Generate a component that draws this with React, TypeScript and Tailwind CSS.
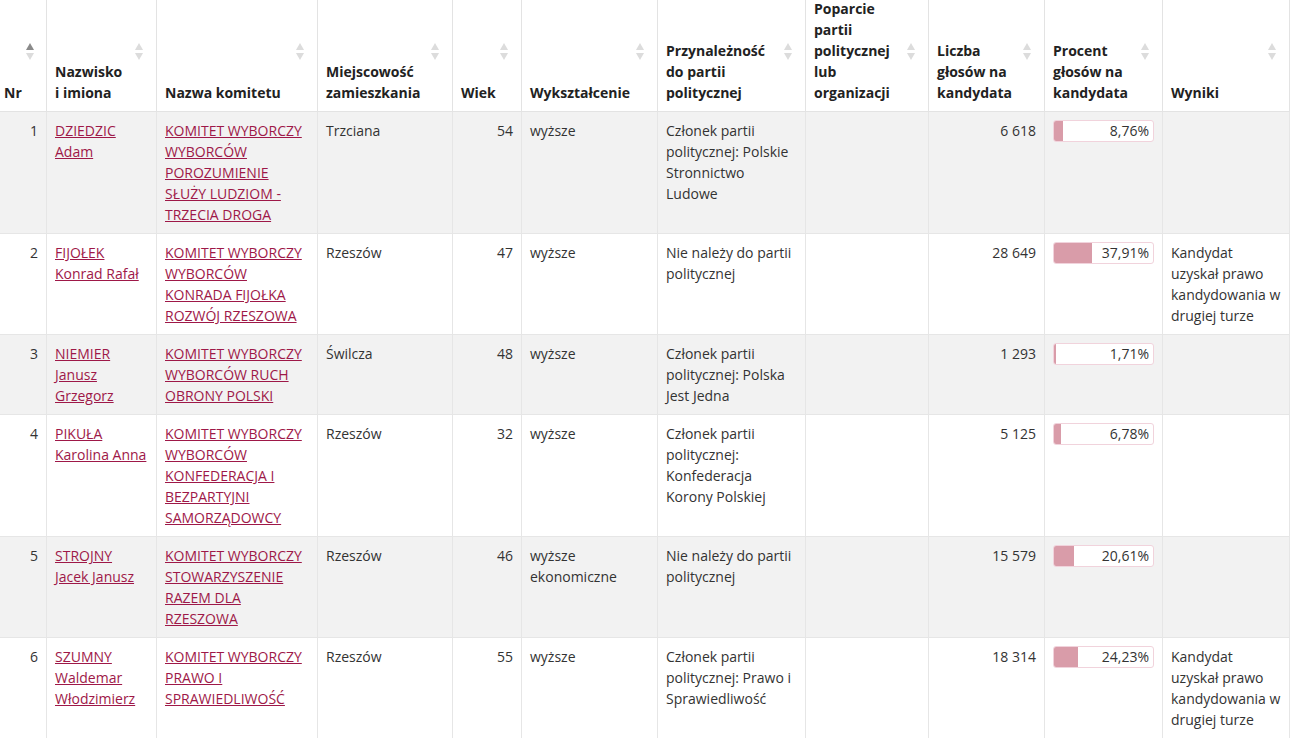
import React from 'react';

type Row = {
  nr: number;
  surname: string;
  names: string;
  committee: string;
  town: string;
  age: number;
  edu: string;
  party: string;
  support: string;
  votes: string;
  pct: number;
  result: string;
};

const rows: Row[] = [
  {
    nr: 1,
    surname: 'DZIEDZIC',
    names: 'Adam',
    committee: 'KOMITET WYBORCZY WYBORCÓW POROZUMIENIE SŁUŻY LUDZIOM - TRZECIA DROGA',
    town: 'Trzciana',
    age: 54,
    edu: 'wyższe',
    party: 'Członek partii politycznej: Polskie Stronnictwo Ludowe',
    support: '',
    votes: '6 618',
    pct: 8.76,
    result: '',
  },
  {
    nr: 2,
    surname: 'FIJOŁEK',
    names: 'Konrad Rafał',
    committee: 'KOMITET WYBORCZY WYBORCÓW KONRADA FIJOŁKA ROZWÓJ RZESZOWA',
    town: 'Rzeszów',
    age: 47,
    edu: 'wyższe',
    party: 'Nie należy do partii politycznej',
    support: '',
    votes: '28 649',
    pct: 37.91,
    result: 'Kandydat uzyskał prawo kandydowania w drugiej turze',
  },
  {
    nr: 3,
    surname: 'NIEMIER',
    names: 'Janusz Grzegorz',
    committee: 'KOMITET WYBORCZY WYBORCÓW RUCH OBRONY POLSKI',
    town: 'Świlcza',
    age: 48,
    edu: 'wyższe',
    party: 'Członek partii politycznej: Polska Jest Jedna',
    support: '',
    votes: '1 293',
    pct: 1.71,
    result: '',
  },
  {
    nr: 4,
    surname: 'PIKUŁA',
    names: 'Karolina Anna',
    committee: 'KOMITET WYBORCZY WYBORCÓW KONFEDERACJA I BEZPARTYJNI SAMORZĄDOWCY',
    town: 'Rzeszów',
    age: 32,
    edu: 'wyższe',
    party: 'Członek partii politycznej: Konfederacja Korony Polskiej',
    support: '',
    votes: '5 125',
    pct: 6.78,
    result: '',
  },
  {
    nr: 5,
    surname: 'STROJNY',
    names: 'Jacek Janusz',
    committee: 'KOMITET WYBORCZY STOWARZYSZENIE RAZEM DLA RZESZOWA',
    town: 'Rzeszów',
    age: 46,
    edu: 'wyższe ekonomiczne',
    party: 'Nie należy do partii politycznej',
    support: '',
    votes: '15 579',
    pct: 20.61,
    result: '',
  },
  {
    nr: 6,
    surname: 'SZUMNY',
    names: 'Waldemar Włodzimierz',
    committee: 'KOMITET WYBORCZY PRAWO I SPRAWIEDLIWOŚĆ',
    town: 'Rzeszów',
    age: 55,
    edu: 'wyższe',
    party: 'Członek partii politycznej: Prawo i Sprawiedliwość',
    support: '',
    votes: '18 314',
    pct: 24.23,
    result: 'Kandydat uzyskał prawo kandydowania w drugiej turze',
  },
];

const headers = [
  'Nr',
  'Nazwisko i imiona',
  'Nazwa komitetu',
  'Miejscowość zamieszkania',
  'Wiek',
  'Wykształcenie',
  'Przynależność do partii politycznej',
  'Poparcie partii politycznej lub organizacji',
  'Liczba głosów na kandydata',
  'Procent głosów na kandydata',
  'Wyniki',
];

const widths = [46, 110, 161, 135, 69, 136, 148, 123, 116, 118, 128];

// little up/down arrows from the sortable header
function SortIcon({ active }: { active?: boolean }) {
  return (
    <svg
      width="8"
      height="17"
      viewBox="0 0 8 17"
      className={`absolute top-[45px] ${active ? 'right-[12px]' : 'right-[13px]'}`}
    >
      <polygon points="4,0 8,7 0,7" fill={active ? '#8a8a8a' : '#dcdcdc'} />
      <polygon points="0,10 8,10 4,17" fill="#dcdcdc" />
    </svg>
  );
}

function Bar({ pct }: { pct: number }) {
  return (
    <div className="relative h-[22px] w-full rounded-[3px] border border-[#f1d3dc] bg-white overflow-hidden">
      <div className="absolute left-0 top-0 bottom-0 bg-[#d99ca9]" style={{ width: `${pct}%` }} />
      <div className="relative pr-1 text-right leading-[20px]">{pct.toFixed(2).replace('.', ',')}%</div>
    </div>
  );
}

// vertical lines sit on the left side of every column but the first; the last one closes on the right too
const edge = (i: number) =>
  i === 0 ? 'border-b' : i === widths.length - 1 ? 'border-l border-r border-b' : 'border-l border-b';

export default function App() {
  const link = 'text-[#9e1848] underline decoration-[#9e1848]';
  const td = (i: number, extra = '') => `${edge(i)} border-[#e6e6e6] px-2 py-2 align-top ${extra}`;

  return (
    <div className="min-h-screen bg-white overflow-hidden" style={{ fontFamily: '"Open Sans", "Noto Sans", sans-serif' }}>
      <table className="-mt-[2px] w-[1290px] table-fixed border-separate border-spacing-0 text-[14px] leading-[21px] text-[#333]">
        <colgroup>
          {widths.map((w, i) => (
            <col key={i} style={{ width: w }} />
          ))}
        </colgroup>
        <thead>
          <tr>
            {headers.map((h, i) => (
              <th
                key={i}
                className={`${edge(i)} ${i === 0 ? 'pl-1' : 'pl-2'} relative border-[#e3e3e3] pr-[30px] pb-2 pt-0 text-left align-bottom font-bold text-[#222]`}
              >
                {h}
                <SortIcon active={i === 0} />
              </th>
            ))}
          </tr>
        </thead>
        <tbody>
          {rows.map((r, i) => (
            <tr key={r.nr} className={i % 2 === 0 ? 'bg-[#f2f2f2]' : 'bg-white'}>
              <td className={td(0, 'text-right')}>{r.nr}</td>
              <td className={td(1)}>
                <a href="#" className={link}>
                  {r.surname}
                  <br />
                  {r.names}
                </a>
              </td>
              <td className={td(2)}>
                <a href="#" className={link}>
                  {r.committee}
                </a>
              </td>
              <td className={td(3)}>{r.town}</td>
              <td className={td(4, 'text-right')}>{r.age}</td>
              <td className={td(5)}>{r.edu}</td>
              <td className={td(6)}>{r.party}</td>
              <td className={td(7)}>{r.support}</td>
              <td className={td(8, 'text-right')}>{r.votes}</td>
              <td className={td(9)}>
                <Bar pct={r.pct} />
              </td>
              <td className={td(10)}>{r.result}</td>
            </tr>
          ))}
        </tbody>
      </table>
    </div>
  );
}
